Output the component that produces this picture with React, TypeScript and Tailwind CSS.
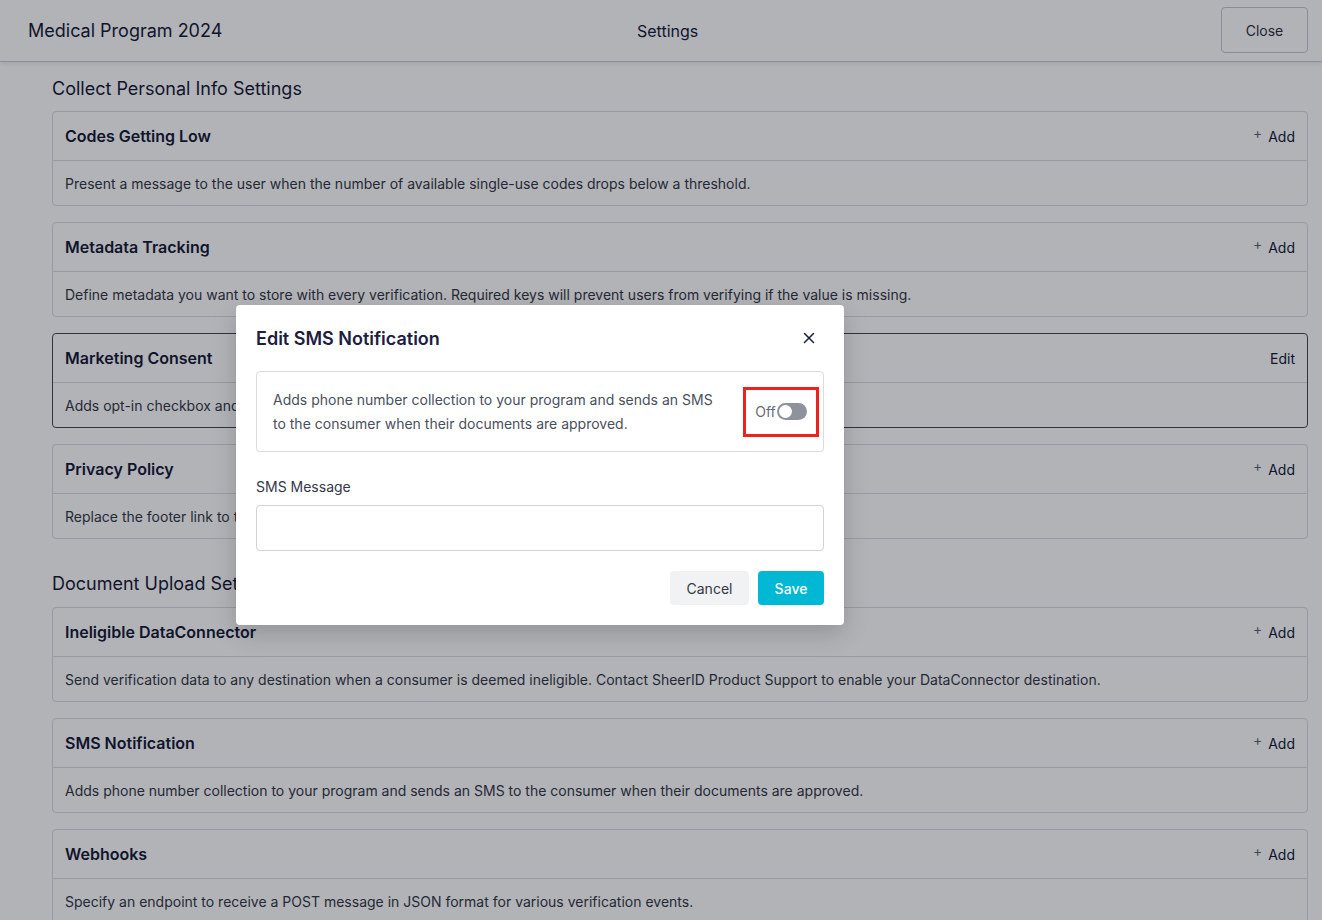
import React from 'react';
import { X } from 'lucide-react';

type Setting = { title: string; description: string; action: 'Add' | 'Edit'; active?: boolean };

const personalInfo: Setting[] = [
  { title: 'Codes Getting Low', description: 'Present a message to the user when the number of available single-use codes drops below a threshold.', action: 'Add' },
  { title: 'Metadata Tracking', description: 'Define metadata you want to store with every verification. Required keys will prevent users from verifying if the value is missing.', action: 'Add' },
  { title: 'Marketing Consent', description: 'Adds opt-in checkbox and consent language to the form for marketing communications.', action: 'Edit', active: true },
  { title: 'Privacy Policy', description: 'Replace the footer link to the SheerID privacy policy with a link to your own privacy policy.', action: 'Add' },
];

const documentUpload: Setting[] = [
  { title: 'Ineligible DataConnector', description: 'Send verification data to any destination when a consumer is deemed ineligible. Contact SheerID Product Support to enable your DataConnector destination.', action: 'Add' },
  { title: 'SMS Notification', description: 'Adds phone number collection to your program and sends an SMS to the consumer when their documents are approved.', action: 'Add' },
  { title: 'Webhooks', description: 'Specify an endpoint to receive a POST message in JSON format for various verification events.', action: 'Add' },
];

const SettingCard: React.FC<{ item: Setting }> = ({ item }) => (
  <div className={`rounded-[4px] border ${item.active ? 'border-[#3f4452]' : 'border-[#d8dade]'}`}>
    <div className="flex h-[49px] items-center justify-between border-b border-[#d8dade] px-3">
      <h3 className="text-[16px] font-semibold text-[#111633]">{item.title}</h3>
      {item.action === 'Add' ? (
        <span className="flex items-start text-[14px] text-[#111633]">
          <span className="mr-[6px] -mt-[4px] text-[14px] text-[#5c6070]">+</span>Add
        </span>
      ) : (
        <span className="text-[14px] text-[#111633]">Edit</span>
      )}
    </div>
    <div className="flex h-[44px] items-center px-3 text-[14px] text-[#2f3442]">{item.description}</div>
  </div>
);

export default function App() {
  return (
    <div className="relative h-[920px] w-full overflow-hidden bg-white" style={{ fontFamily: 'Inter, "Noto Sans", sans-serif' }}>
      <header className="relative flex h-[62px] items-center justify-between border-b border-[#c9cbd0] px-[28px] shadow-[0_2px_4px_rgba(0,0,0,0.08)]">
        <h1 className="text-[18px] text-[#111633]">Medical Program 2024</h1>
        <span className="absolute left-[637px] text-[16px] text-[#111633]">Settings</span>
        <button className="-mr-[14px] -mt-[1px] h-[46px] w-[87px] rounded-[4px] border border-[#c6c8cd] text-[14px] text-[#2a2e3a]">Close</button>
      </header>

      <main className="px-[52px] pt-[15px] pr-[14px]">
        <h2 className="mb-[10px] text-[18px] leading-[24px] text-[#111633]">Collect Personal Info Settings</h2>
        <div className="flex flex-col gap-4">
          {personalInfo.map((s) => (
            <SettingCard key={s.title} item={s} />
          ))}
        </div>
        <h2 className="mb-[11px] mt-[33px] text-[18px] leading-[24px] text-[#111633]">Document Upload Settings</h2>
        <div className="flex flex-col gap-4">
          {documentUpload.map((s) => (
            <SettingCard key={s.title} item={s} />
          ))}
        </div>
      </main>

      <div className="absolute inset-0 bg-[rgba(16,19,31,0.32)]" />

      <div className="absolute left-[236px] top-[305px] w-[608px] rounded-[4px] bg-white px-5 pb-5 shadow-[0_8px_24px_rgba(0,0,0,0.18)]">
        <div className="flex h-[66px] items-center justify-between">
          <h2 className="text-[18px] font-semibold text-[#1b2040]">Edit SMS Notification</h2>
          <X className="mr-[6px] h-[18px] w-[18px] text-[#1b2040]" strokeWidth={2} />
        </div>
        <div className="flex h-[81px] items-center justify-between rounded-[4px] border border-[#d9dbe0] pl-4 pr-[4px]">
          <p className="w-[448px] text-[14px] leading-[24px] text-[#4a4f5c]">
            Adds phone number collection to your program and sends an SMS to the consumer when their documents are approved.
          </p>
          <div className="flex h-[50px] w-[76px] items-center justify-center border-[3px] border-[#f0201d]">
            <span className="text-[14px] text-[#666b78]">Off</span>
            <span className="ml-[1px] flex h-[17px] w-[30px] items-center rounded-full bg-[#8e929c] pl-[2px]">
              <span className="h-[13px] w-[13px] rounded-full bg-white" />
            </span>
          </div>
        </div>
        <label className="mt-[24px] block text-[14px] text-[#333847]">SMS Message</label>
        <input className="mt-[8px] block h-[46px] w-full rounded-[4px] border border-[#d2d4da] outline-none" />
        <div className="mt-[20px] flex justify-end gap-[9px]">
          <button className="h-[34px] w-[79px] rounded-[4px] bg-[#f1f2f4] text-[14px] text-[#343845]">Cancel</button>
          <button className="h-[34px] w-[66px] rounded-[4px] bg-[#00b8d4] text-[14px] font-medium text-white">Save</button>
        </div>
      </div>
    </div>
  );
}
